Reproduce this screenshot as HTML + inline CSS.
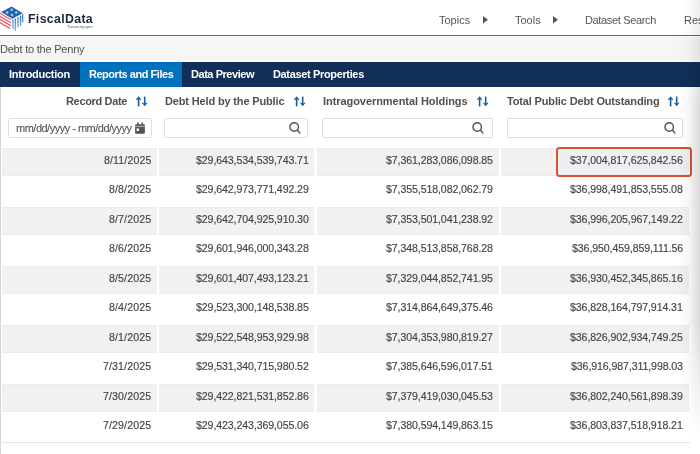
<!DOCTYPE html><html><head><meta charset="utf-8"><style>
*{margin:0;padding:0;box-sizing:border-box}
html,body{width:700px;height:454px;overflow:hidden;background:#fff;font-family:"Liberation Sans",sans-serif;color:#555}
.a{position:absolute;white-space:nowrap;line-height:1;will-change:transform}
.hdrline{position:absolute;left:0;top:35px;width:700px;height:1px;background:#666}
.crumb{position:absolute;left:0;top:37px;width:700px;height:23.5px;background:#f6f6f5}
.tabs{position:absolute;left:0;top:62px;width:700px;height:25px;background:#112f59}
.tabon{position:absolute;left:79.5px;top:62px;width:102.5px;height:25px;background:#0071bc}
.tab{color:#fff;font-weight:bold;font-size:11px}
.th{font-weight:bold;font-size:11px;color:#505050}
.inp{position:absolute;top:118px;height:19.5px;border:1px solid #dedede;border-radius:2px;background:#fff}
.cell{position:absolute;height:28.2px;background:#f1f1f1;border-top:1px solid #ebebeb;border-bottom:1px solid #ebebeb}
.td{z-index:2;font-size:10.6px;color:#444;-webkit-text-stroke:0.15px #444}
.lb{position:absolute;left:0;top:87px;width:1px;height:367px;background:#d6d6d6}
</style></head><body>
<svg class="a" style="left:0;top:0" width="28" height="34" viewBox="0 0 28 34">
<defs><linearGradient id="vb" gradientUnits="userSpaceOnUse" x1="0" y1="14" x2="0" y2="31"><stop offset="0" stop-color="#2f6db8"/><stop offset="1" stop-color="#6cc0ee"/></linearGradient></defs>
<polygon points="1,11.9 11.6,6.4 22.8,13.2 12.3,18.8" fill="#2f62ad"/>
<g fill="#8ad4f5"><circle cx="7.1" cy="12.5" r="1.25"/><circle cx="11.7" cy="9.8" r="1.25"/><circle cx="16.3" cy="12.5" r="1.25"/><circle cx="12" cy="15.1" r="1.25"/></g>
<g stroke="#ec5b6a" stroke-width="1.25"><line x1="-1" y1="12.8" x2="11" y2="19.7"/><line x1="-1" y1="15.9" x2="11" y2="22.8"/><line x1="-1" y1="19" x2="11" y2="25.9"/><line x1="-1" y1="22.1" x2="10" y2="28.4"/></g>
<g stroke="url(#vb)" stroke-width="1.3"><line x1="13" y1="19.5" x2="13" y2="29.2"/><line x1="15.3" y1="18.4" x2="15.3" y2="30.9"/><line x1="18" y1="17" x2="18" y2="27.4"/><line x1="20.5" y1="15.7" x2="20.5" y2="26"/><line x1="22.6" y1="14.4" x2="22.6" y2="22.5"/></g>
</svg>
<div class="a" style="left:27.5px;top:12.5px;font-size:12.3px;font-weight:bold;color:#1c2738;letter-spacing:0.35px">FiscalData</div>
<div class="a" style="left:67.4px;top:24.6px;font-size:4.3px;color:#555;letter-spacing:0.1px">Treasury.gov</div>
<div class="a" style="left:439px;top:15px;font-size:11px;color:#555">Topics</div>
<svg class="a" style="left:482.5px;top:16px" width="6" height="8"><polygon points="0,0 5,3.7 0,7.4" fill="#555"/></svg>
<div class="a" style="left:515px;top:15px;font-size:11px;color:#555">Tools</div>
<svg class="a" style="left:553px;top:16px" width="6" height="8"><polygon points="0,0 5,3.7 0,7.4" fill="#555"/></svg>
<div class="a" style="left:585px;top:15px;font-size:11px;color:#555;letter-spacing:-0.35px">Dataset Search</div>
<div class="a" style="left:684px;top:15px;font-size:11px;color:#555">Res</div>
<div class="hdrline"></div><div class="crumb"></div>
<div class="a" style="left:-0.3px;top:44px;font-size:11px;color:#4d4d4d;letter-spacing:-0.22px">Debt to the Penny</div>
<div class="tabs"></div><div class="tabon"></div>
<div class="a tab" style="left:9px;top:69px;letter-spacing:-0.27px">Introduction</div>
<div class="a tab" style="left:88.5px;top:69px;letter-spacing:-0.47px">Reports and Files</div>
<div class="a tab" style="left:190.5px;top:69px;letter-spacing:-0.45px">Data Preview</div>
<div class="a tab" style="left:273px;top:69px;letter-spacing:-0.35px">Dataset Properties</div>
<div class="a th" style="left:65.8px;top:96px;letter-spacing:-0.34px">Record Date</div>
<svg class="a" style="left:135.8px;top:95.5px" width="12" height="11" viewBox="0 0 12 11"><g fill="#1b5f9c"><rect x="1.8" y="2" width="1.6" height="8.4"/><path d="M2.6,0.3 L5.3,3.5 L4.3,4.2 L2.6,2.4 L0.9,4.2 L-0.1,3.5 Z"/><rect x="7.9" y="0.6" width="1.6" height="8.4"/><path d="M8.7,10.3 L11.4,7.1 L10.4,6.4 L8.7,8.2 L7,6.4 L6,7.1 Z"/></g></svg>
<div class="a th" style="left:165px;top:96px;letter-spacing:-0.15px">Debt Held by the Public</div>
<svg class="a" style="left:293.5px;top:95.5px" width="12" height="11" viewBox="0 0 12 11"><g fill="#1b5f9c"><rect x="1.8" y="2" width="1.6" height="8.4"/><path d="M2.6,0.3 L5.3,3.5 L4.3,4.2 L2.6,2.4 L0.9,4.2 L-0.1,3.5 Z"/><rect x="7.9" y="0.6" width="1.6" height="8.4"/><path d="M8.7,10.3 L11.4,7.1 L10.4,6.4 L8.7,8.2 L7,6.4 L6,7.1 Z"/></g></svg>
<div class="a th" style="left:322.9px;top:96px;letter-spacing:-0.06px">Intragovernmental Holdings</div>
<svg class="a" style="left:476.8px;top:95.5px" width="12" height="11" viewBox="0 0 12 11"><g fill="#1b5f9c"><rect x="1.8" y="2" width="1.6" height="8.4"/><path d="M2.6,0.3 L5.3,3.5 L4.3,4.2 L2.6,2.4 L0.9,4.2 L-0.1,3.5 Z"/><rect x="7.9" y="0.6" width="1.6" height="8.4"/><path d="M8.7,10.3 L11.4,7.1 L10.4,6.4 L8.7,8.2 L7,6.4 L6,7.1 Z"/></g></svg>
<div class="a th" style="left:506.9px;top:96px;letter-spacing:-0.15px">Total Public Debt Outstanding</div>
<svg class="a" style="left:668.3px;top:95.5px" width="12" height="11" viewBox="0 0 12 11"><g fill="#1b5f9c"><rect x="1.8" y="2" width="1.6" height="8.4"/><path d="M2.6,0.3 L5.3,3.5 L4.3,4.2 L2.6,2.4 L0.9,4.2 L-0.1,3.5 Z"/><rect x="7.9" y="0.6" width="1.6" height="8.4"/><path d="M8.7,10.3 L11.4,7.1 L10.4,6.4 L8.7,8.2 L7,6.4 L6,7.1 Z"/></g></svg>
<div class="inp" style="left:8px;width:143.7px"></div>
<div class="inp" style="left:164px;width:144.39999999999998px"></div>
<div class="inp" style="left:322.4px;width:170.40000000000003px"></div>
<div class="inp" style="left:506.5px;width:176.70000000000005px"></div>
<div class="a" style="left:16px;top:123px;font-size:11px;color:#555;letter-spacing:-0.5px;-webkit-text-stroke:0.1px #555">mm/dd/yyyy - mm/dd/yyyy</div>
<svg class="a" style="left:135px;top:122px" width="11" height="12" viewBox="0 0 11 12"><rect x="0.1" y="2.3" width="9.8" height="9.4" rx="1" fill="#555"/><rect x="2.2" y="0.4" width="1.5" height="2.5" fill="#555"/><rect x="6.6" y="0.4" width="1.5" height="2.5" fill="#555"/><rect x="0.1" y="3.9" width="9.8" height="0.6" fill="#fff"/><rect x="1.6" y="6.4" width="2.4" height="2.6" fill="#fff"/></svg>
<svg class="a" style="left:288.9px;top:122px" width="13" height="13" viewBox="0 0 13 13"><circle cx="5.2" cy="4.9" r="4.25" stroke="#555" stroke-width="1.45" fill="none"/><line x1="8.3" y1="8.1" x2="10.9" y2="10.9" stroke="#555" stroke-width="1.5" stroke-linecap="round"/></svg>
<svg class="a" style="left:472.4px;top:122px" width="13" height="13" viewBox="0 0 13 13"><circle cx="5.2" cy="4.9" r="4.25" stroke="#555" stroke-width="1.45" fill="none"/><line x1="8.3" y1="8.1" x2="10.9" y2="10.9" stroke="#555" stroke-width="1.5" stroke-linecap="round"/></svg>
<svg class="a" style="left:663.9px;top:122px" width="13" height="13" viewBox="0 0 13 13"><circle cx="5.2" cy="4.9" r="4.25" stroke="#555" stroke-width="1.45" fill="none"/><line x1="8.3" y1="8.1" x2="10.9" y2="10.9" stroke="#555" stroke-width="1.5" stroke-linecap="round"/></svg>
<div class="lb"></div>
<div class="cell" style="left:2px;top:148.00px;width:155px"></div>
<div class="cell" style="left:159px;top:148.00px;width:155px"></div>
<div class="cell" style="left:317px;top:148.00px;width:181.5px"></div>
<div class="cell" style="left:500.8px;top:148.00px;width:188.2px"></div>
<div class="a td" style="right:548.82px;top:155.00px;letter-spacing:0.12px">8/11/2025</div>
<div class="a td" style="right:391.30px;top:155.00px;letter-spacing:-0.1px">$29,643,534,539,743.71</div>
<div class="a td" style="right:207.50px;top:155.00px;letter-spacing:-0.1px">$7,361,283,086,098.85</div>
<div class="a td" style="right:16.90px;top:155.00px;letter-spacing:-0.1px">$37,004,817,625,842.56</div>
<div class="a td" style="right:548.82px;top:184.45px;letter-spacing:0.12px">8/8/2025</div>
<div class="a td" style="right:391.30px;top:184.45px;letter-spacing:-0.1px">$29,642,973,771,492.29</div>
<div class="a td" style="right:207.50px;top:184.45px;letter-spacing:-0.1px">$7,355,518,082,062.79</div>
<div class="a td" style="right:16.90px;top:184.45px;letter-spacing:-0.1px">$36,998,491,853,555.08</div>
<div class="cell" style="left:2px;top:206.90px;width:155px"></div>
<div class="cell" style="left:159px;top:206.90px;width:155px"></div>
<div class="cell" style="left:317px;top:206.90px;width:181.5px"></div>
<div class="cell" style="left:500.8px;top:206.90px;width:188.2px"></div>
<div class="a td" style="right:548.82px;top:213.90px;letter-spacing:0.12px">8/7/2025</div>
<div class="a td" style="right:391.30px;top:213.90px;letter-spacing:-0.1px">$29,642,704,925,910.30</div>
<div class="a td" style="right:207.50px;top:213.90px;letter-spacing:-0.1px">$7,353,501,041,238.92</div>
<div class="a td" style="right:16.90px;top:213.90px;letter-spacing:-0.1px">$36,996,205,967,149.22</div>
<div class="a td" style="right:548.82px;top:243.35px;letter-spacing:0.12px">8/6/2025</div>
<div class="a td" style="right:391.30px;top:243.35px;letter-spacing:-0.1px">$29,601,946,000,343.28</div>
<div class="a td" style="right:207.50px;top:243.35px;letter-spacing:-0.1px">$7,348,513,858,768.28</div>
<div class="a td" style="right:16.90px;top:243.35px;letter-spacing:-0.1px">$36,950,459,859,111.56</div>
<div class="cell" style="left:2px;top:265.80px;width:155px"></div>
<div class="cell" style="left:159px;top:265.80px;width:155px"></div>
<div class="cell" style="left:317px;top:265.80px;width:181.5px"></div>
<div class="cell" style="left:500.8px;top:265.80px;width:188.2px"></div>
<div class="a td" style="right:548.82px;top:272.80px;letter-spacing:0.12px">8/5/2025</div>
<div class="a td" style="right:391.30px;top:272.80px;letter-spacing:-0.1px">$29,601,407,493,123.21</div>
<div class="a td" style="right:207.50px;top:272.80px;letter-spacing:-0.1px">$7,329,044,852,741.95</div>
<div class="a td" style="right:16.90px;top:272.80px;letter-spacing:-0.1px">$36,930,452,345,865.16</div>
<div class="a td" style="right:548.82px;top:302.25px;letter-spacing:0.12px">8/4/2025</div>
<div class="a td" style="right:391.30px;top:302.25px;letter-spacing:-0.1px">$29,523,300,148,538.85</div>
<div class="a td" style="right:207.50px;top:302.25px;letter-spacing:-0.1px">$7,314,864,649,375.46</div>
<div class="a td" style="right:16.90px;top:302.25px;letter-spacing:-0.1px">$36,828,164,797,914.31</div>
<div class="cell" style="left:2px;top:324.70px;width:155px"></div>
<div class="cell" style="left:159px;top:324.70px;width:155px"></div>
<div class="cell" style="left:317px;top:324.70px;width:181.5px"></div>
<div class="cell" style="left:500.8px;top:324.70px;width:188.2px"></div>
<div class="a td" style="right:548.82px;top:331.70px;letter-spacing:0.12px">8/1/2025</div>
<div class="a td" style="right:391.30px;top:331.70px;letter-spacing:-0.1px">$29,522,548,953,929.98</div>
<div class="a td" style="right:207.50px;top:331.70px;letter-spacing:-0.1px">$7,304,353,980,819.27</div>
<div class="a td" style="right:16.90px;top:331.70px;letter-spacing:-0.1px">$36,826,902,934,749.25</div>
<div class="a td" style="right:548.82px;top:361.15px;letter-spacing:0.12px">7/31/2025</div>
<div class="a td" style="right:391.30px;top:361.15px;letter-spacing:-0.1px">$29,531,340,715,980.52</div>
<div class="a td" style="right:207.50px;top:361.15px;letter-spacing:-0.1px">$7,385,646,596,017.51</div>
<div class="a td" style="right:16.90px;top:361.15px;letter-spacing:-0.1px">$36,916,987,311,998.03</div>
<div class="cell" style="left:2px;top:383.60px;width:155px"></div>
<div class="cell" style="left:159px;top:383.60px;width:155px"></div>
<div class="cell" style="left:317px;top:383.60px;width:181.5px"></div>
<div class="cell" style="left:500.8px;top:383.60px;width:188.2px"></div>
<div class="a td" style="right:548.82px;top:390.60px;letter-spacing:0.12px">7/30/2025</div>
<div class="a td" style="right:391.30px;top:390.60px;letter-spacing:-0.1px">$29,422,821,531,852.86</div>
<div class="a td" style="right:207.50px;top:390.60px;letter-spacing:-0.1px">$7,379,419,030,045.53</div>
<div class="a td" style="right:16.90px;top:390.60px;letter-spacing:-0.1px">$36,802,240,561,898.39</div>
<div class="a td" style="right:548.82px;top:420.05px;letter-spacing:0.12px">7/29/2025</div>
<div class="a td" style="right:391.30px;top:420.05px;letter-spacing:-0.1px">$29,423,243,369,055.06</div>
<div class="a td" style="right:207.50px;top:420.05px;letter-spacing:-0.1px">$7,380,594,149,863.15</div>
<div class="a td" style="right:16.90px;top:420.05px;letter-spacing:-0.1px">$36,803,837,518,918.21</div>
<div class="a" style="left:0;top:442px;width:690px;height:1px;background:#e6e6e6"></div>
<div class="a" style="left:555.8px;top:146.8px;width:136.2px;height:29.8px;border:2.2px solid #d6552c;border-radius:3.5px;background:rgba(215,225,245,0.15);z-index:1"></div>
<div class="a" style="left:678px;top:0;width:22px;height:454px;z-index:5;background:linear-gradient(to right,rgba(0,0,0,0) 0%,rgba(0,0,0,0.03) 45%,rgba(0,0,0,0.15) 100%);-webkit-mask-image:linear-gradient(to bottom,rgba(0,0,0,0.45) 0px,rgba(0,0,0,0.55) 60px,#000 110px,#000 320px,rgba(0,0,0,0.35) 400px,rgba(0,0,0,0) 440px)"></div>
</body></html>
